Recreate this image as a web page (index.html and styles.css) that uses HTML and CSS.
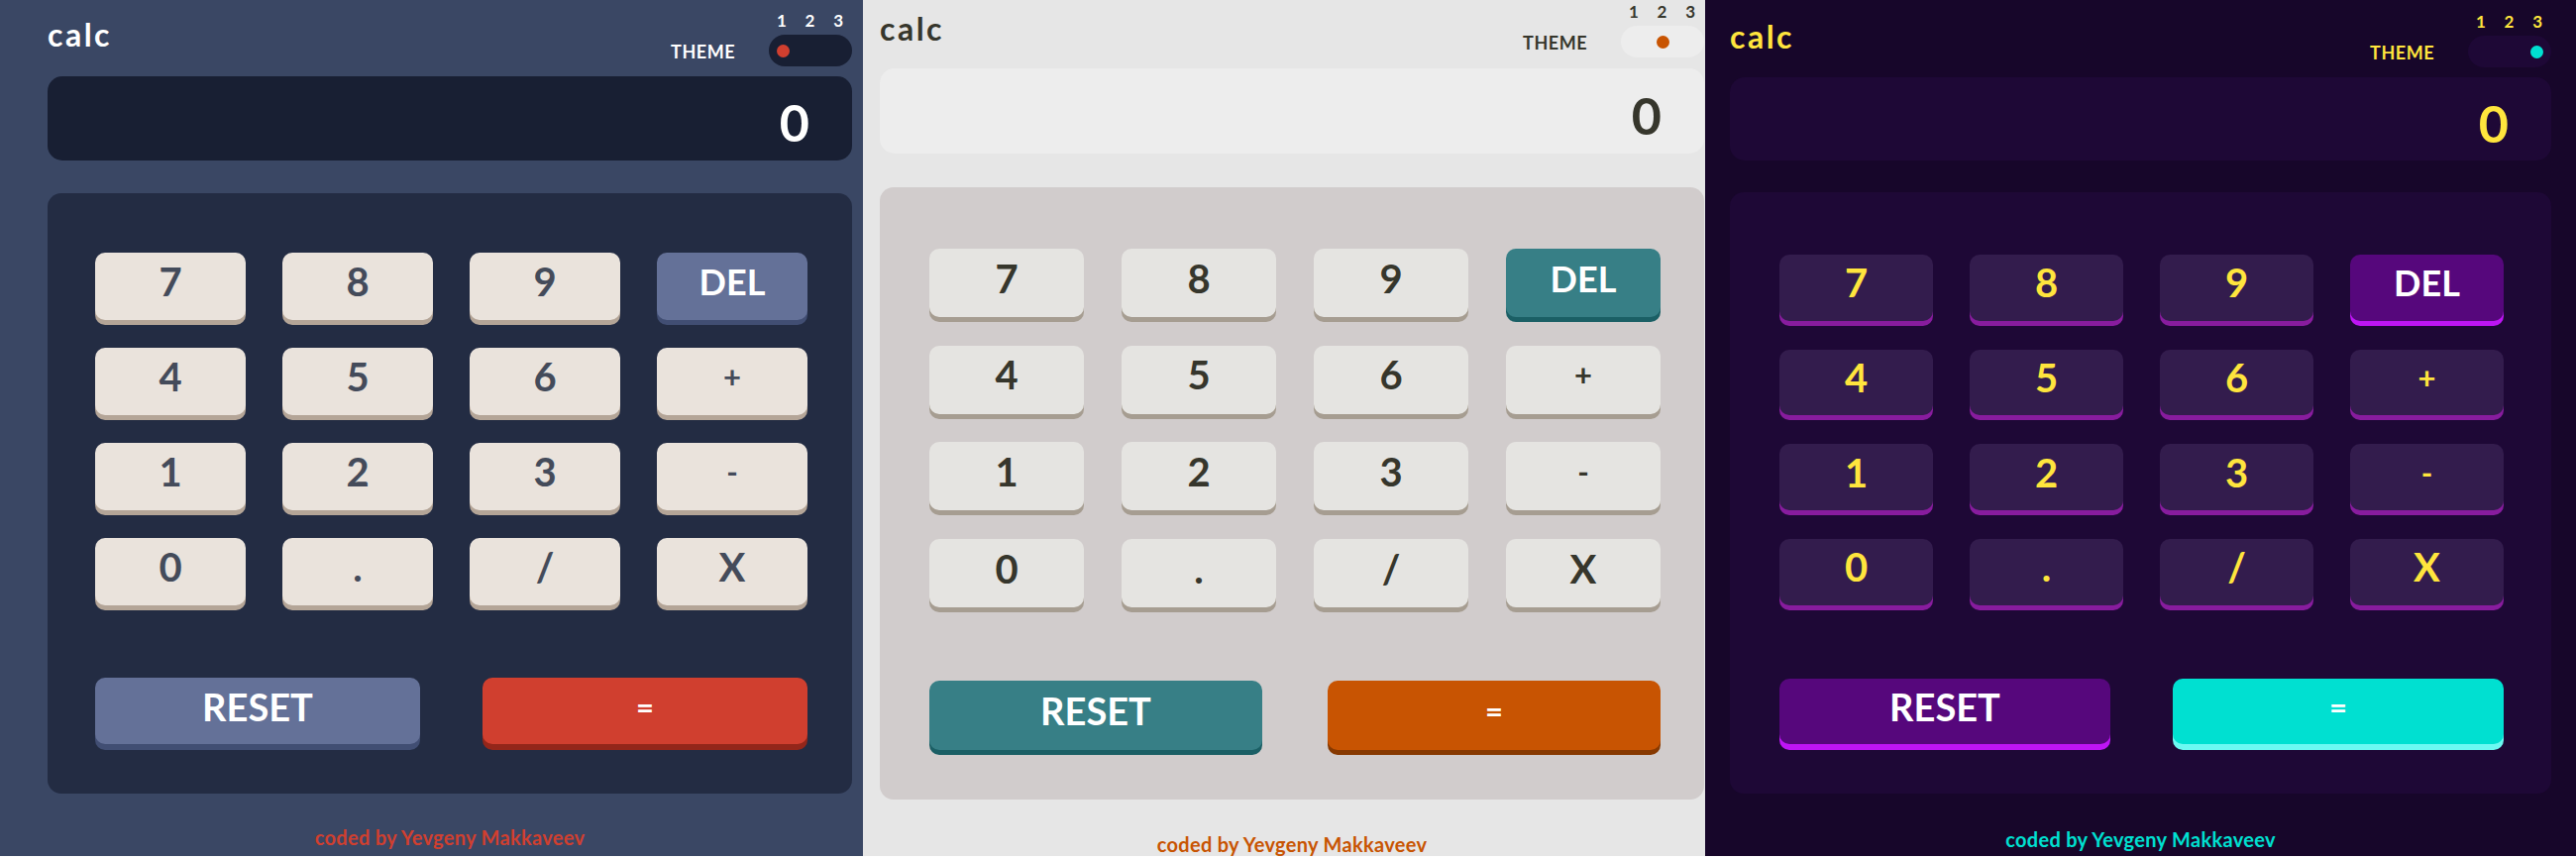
FILE: index.html
```html
<!DOCTYPE html>
<html lang="en">
<head>
<meta charset="utf-8">
<title>calc</title>
<link rel="stylesheet" href="styles.css">
</head>
<body>
<main class="row">
  <section class="panel t1">
    <header class="header">
      <h1 class="logo">calc</h1>
      <div class="theme">
        <span class="theme-label">THEME</span>
        <div class="switch">
          <div class="nums"><span>1</span><span>2</span><span>3</span></div>
          <div class="track pos1"><span class="dot"></span></div>
        </div>
      </div>
    </header>
    <div class="screen">0</div>
    <div class="keypad">
      <div class="keys">
        <button class="key">7</button><button class="key">8</button><button class="key">9</button><button class="key key-alt">DEL</button>
        <button class="key">4</button><button class="key">5</button><button class="key">6</button><button class="key"><span class="op">+</span></button>
        <button class="key">1</button><button class="key">2</button><button class="key">3</button><button class="key"><span class="op">-</span></button>
        <button class="key">0</button><button class="key">.</button><button class="key">/</button><button class="key">X</button>
      </div>
      <div class="actions">
        <button class="key key-alt wide">RESET</button>
        <button class="key key-eq wide"><span class="op">=</span></button>
      </div>
    </div>
    <p class="credit">coded by Yevgeny Makkaveev</p>
  </section>

  <section class="panel t2">
    <header class="header">
      <h1 class="logo">calc</h1>
      <div class="theme">
        <span class="theme-label">THEME</span>
        <div class="switch">
          <div class="nums"><span>1</span><span>2</span><span>3</span></div>
          <div class="track pos2"><span class="dot"></span></div>
        </div>
      </div>
    </header>
    <div class="screen">0</div>
    <div class="keypad">
      <div class="keys">
        <button class="key">7</button><button class="key">8</button><button class="key">9</button><button class="key key-alt">DEL</button>
        <button class="key">4</button><button class="key">5</button><button class="key">6</button><button class="key"><span class="op">+</span></button>
        <button class="key">1</button><button class="key">2</button><button class="key">3</button><button class="key"><span class="op">-</span></button>
        <button class="key">0</button><button class="key">.</button><button class="key">/</button><button class="key">X</button>
      </div>
      <div class="actions">
        <button class="key key-alt wide">RESET</button>
        <button class="key key-eq wide"><span class="op">=</span></button>
      </div>
    </div>
    <p class="credit">coded by Yevgeny Makkaveev</p>
  </section>

  <section class="panel t3">
    <header class="header">
      <h1 class="logo">calc</h1>
      <div class="theme">
        <span class="theme-label">THEME</span>
        <div class="switch">
          <div class="nums"><span>1</span><span>2</span><span>3</span></div>
          <div class="track pos3"><span class="dot"></span></div>
        </div>
      </div>
    </header>
    <div class="screen">0</div>
    <div class="keypad">
      <div class="keys">
        <button class="key">7</button><button class="key">8</button><button class="key">9</button><button class="key key-alt">DEL</button>
        <button class="key">4</button><button class="key">5</button><button class="key">6</button><button class="key"><span class="op">+</span></button>
        <button class="key">1</button><button class="key">2</button><button class="key">3</button><button class="key"><span class="op">-</span></button>
        <button class="key">0</button><button class="key">.</button><button class="key">/</button><button class="key">X</button>
      </div>
      <div class="actions">
        <button class="key key-alt wide">RESET</button>
        <button class="key key-eq wide"><span class="op">=</span></button>
      </div>
    </div>
    <p class="credit">coded by Yevgeny Makkaveev</p>
  </section>
</main>
</body>
</html>
```

FILE: styles.css
```css
* { box-sizing: border-box; }

html, body {
  margin: 0;
  padding: 0;
  background: #ffffff;
}

body {
  font-family: "Lato", "Liberation Sans", sans-serif;
  font-weight: 700;
}

.row {
  display: grid;
  grid-template-columns: 871px 850px 879px;
  height: 864px;
}

.panel {
  height: 864px;
  overflow: hidden;
  padding: var(--pt) var(--pr) 0 var(--pl);
  background: var(--bg);
  color: var(--text);
}

/* ---------- theme 1 ---------- */
.t1 {
  --bg: #3a4764;
  --text: #ffffff;
  --screen: #181f33;
  --pad: #232c43;
  --track: #181f33;
  --dot: #d03f2f;
  --key: #eae3dc;
  --key-sh: #b4a597;
  --key-text: #444b5a;
  --alt: #647198;
  --alt-sh: #414e73;
  --alt-text: #ffffff;
  --eq: #d03f2f;
  --eq-sh: #93261a;
  --eq-text: #ffffff;
  --credit: #d03f2f;

  --pt: 13px; --pl: 48px; --pr: 11px;
  --logo-top: 6px;
  --hh: 64px;
  --screen-h: 85px;
  --screen-gap: 33px;
  --kp-pad: 60px 45px 50px 48px;
  --kh: 68px;
  --rg: 28px;
  --cg: 37px;
  --act-gap: 73px;
  --ah: 67px;
  --acg: 63px;
  --ash: 6px;
  --credit-top: 34px;
}

/* ---------- theme 2 ---------- */
.t2 {
  --bg: #e6e6e6;
  --text: #36362c;
  --screen: #ededed;
  --pad: #d1cccc;
  --track: #ededed;
  --dot: #c85402;
  --key: #e5e4e1;
  --key-sh: #a69d91;
  --key-text: #36362c;
  --alt: #377f86;
  --alt-sh: #1b5f65;
  --alt-text: #ffffff;
  --eq: #c85402;
  --eq-sh: #873901;
  --eq-text: #ffffff;
  --credit: #c85402;

  --pt: 4px; --pl: 17px; --pr: 1px;
  --logo-top: 9px;
  --hh: 65px;
  --screen-h: 86px;
  --screen-gap: 34px;
  --kp-pad: 62px 44px 50px 50px;
  --kh: 69px;
  --rg: 28.7px;
  --cg: 38px;
  --act-gap: 74px;
  --ah: 70px;
  --acg: 66px;
  --ash: 5px;
  --credit-top: 35px;
}

/* ---------- theme 3 ---------- */
.t3 {
  --bg: #17062a;
  --text: #ffe53d;
  --screen: #1e0836;
  --pad: #1e0836;
  --track: #1e0836;
  --dot: #00e0d1;
  --key: #331c4d;
  --key-sh: #881c9e;
  --key-text: #ffe53d;
  --alt: #56077c;
  --alt-sh: #be15f4;
  --alt-text: #ffffff;
  --eq: #00e0d1;
  --eq-sh: #6cf9f2;
  --eq-text: #ffffff;
  --credit: #00e0d1;

  --pt: 14px; --pl: 25px; --pr: 25px;
  --logo-top: 7px;
  --hh: 64px;
  --screen-h: 84px;
  --screen-gap: 32px;
  --kp-pad: 63px 48px 50px 50px;
  --kh: 66.5px;
  --rg: 29.2px;
  --cg: 37px;
  --act-gap: 74.5px;
  --ah: 66px;
  --acg: 63px;
  --ash: 6px;
  --credit-top: 36px;
}

/* ---------- header ---------- */
.header {
  display: flex;
  justify-content: space-between;
  align-items: flex-start;
  height: var(--hh);
}

.logo {
  margin: var(--logo-top) 0 0 0;
  font-size: 32px;
  line-height: 32px;
  font-weight: 700;
  letter-spacing: 2.5px;
}

.theme {
  display: flex;
  align-items: flex-end;
  gap: 34px;
}

.theme-label {
  font-size: 18px;
  line-height: 18px;
  letter-spacing: 0.5px;
  margin-bottom: 6px;
}

.switch {
  display: flex;
  flex-direction: column;
  gap: 6px;
  width: 84px;
}

.nums {
  display: flex;
  justify-content: space-between;
  padding: 0 9px 0 8px;
  font-size: 17px;
  line-height: 16px;
}

.track {
  display: flex;
  align-items: center;
  height: 32px;
  padding: 0 8px;
  border-radius: 16px;
  background: var(--track);
}

.track.pos1 { justify-content: flex-start; }
.track.pos2 { justify-content: center; }
.track.pos3 { justify-content: flex-end; }

.dot {
  width: 13px;
  height: 13px;
  border-radius: 50%;
  background: var(--dot);
}

/* ---------- screen ---------- */
.screen {
  display: flex;
  justify-content: flex-end;
  align-items: center;
  height: var(--screen-h);
  padding: 7px 43px 0 0;
  border-radius: 15px;
  background: var(--screen);
  font-size: 52px;
  line-height: 52px;
}

/* ---------- keypad ---------- */
.keypad {
  margin-top: var(--screen-gap);
  padding: var(--kp-pad);
  border-radius: 14px;
  background: var(--pad);
}

.keys {
  display: grid;
  grid-template-columns: repeat(4, 1fr);
  column-gap: var(--cg);
  row-gap: var(--rg);
}

.key {
  display: flex;
  align-items: center;
  justify-content: center;
  height: var(--kh);
  padding: 0 0 10px 0;
  border: 0;
  border-radius: 10px;
  background: var(--key);
  box-shadow: 0 5px 0 var(--key-sh);
  color: var(--key-text);
  font-family: "Lato", "Liberation Sans", sans-serif;
  font-weight: 700;
  font-size: 40px;
  line-height: 40px;
}

.key .op {
  font-size: 31px;
  line-height: 40px;
}

.key-alt {
  background: var(--alt);
  box-shadow: 0 5px 0 var(--alt-sh);
  color: var(--alt-text);
  font-size: 36px;
}

.actions {
  display: grid;
  grid-template-columns: 1fr 1fr;
  column-gap: var(--acg);
  margin-top: var(--act-gap);
}

.wide {
  height: var(--ah);
  font-size: 38px;
  box-shadow: 0 var(--ash) 0 var(--alt-sh);
}

.key-eq {
  background: var(--eq);
  box-shadow: 0 var(--ash) 0 var(--eq-sh);
  color: var(--eq-text);
}

/* ---------- credit ---------- */
.credit {
  margin: var(--credit-top) 0 0 0;
  text-align: center;
  color: var(--credit);
  font-size: 20px;
  line-height: 20px;
  letter-spacing: 0.3px;
}
```
